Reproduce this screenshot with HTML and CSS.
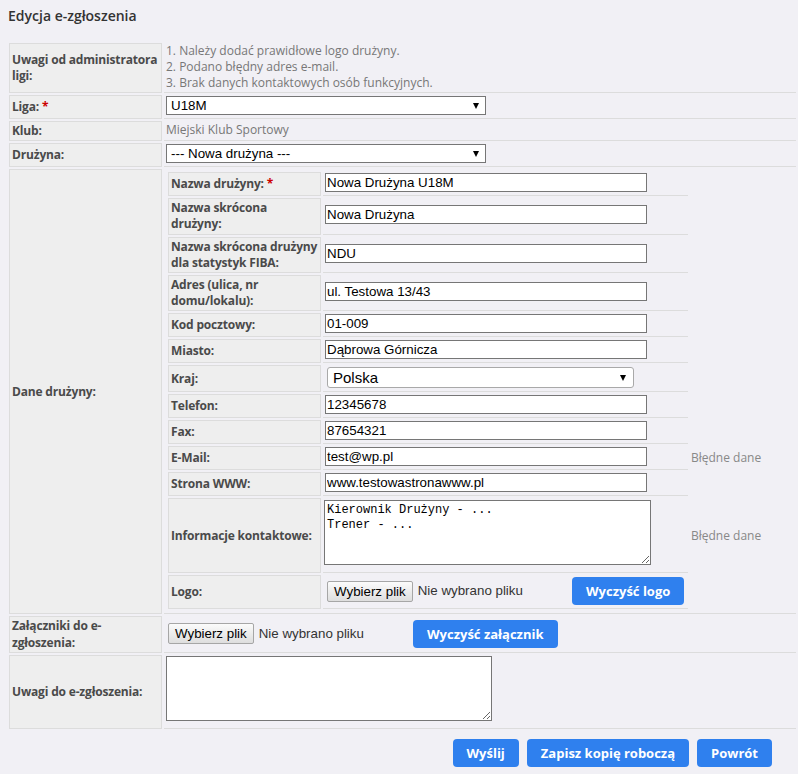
FILE: index.html
```html
<!DOCTYPE html>
<html lang="pl">
<head>
<meta charset="utf-8">
<title>Edycja e-zgłoszenia</title>
<link rel="stylesheet" href="styles.css">
</head>
<body>
<div class="page">
  <h1 class="title">Edycja e-zgłoszenia</h1>
  <table class="form outer">
    <tr>
      <th class="lbl">Uwagi od administratora ligi:</th>
      <td class="val notes">1. Należy dodać prawidłowe logo drużyny.<br>2. Podano błędny adres e-mail.<br>3. Brak danych kontaktowych osób funkcyjnych.</td>
    </tr>
    <tr>
      <th class="lbl">Liga: <span class="req">*</span></th>
      <td class="val"><div class="sel"><select class="select"><option>U18M</option></select></div></td>
    </tr>
    <tr>
      <th class="lbl">Klub:</th>
      <td class="val text">Miejski Klub Sportowy</td>
    </tr>
    <tr>
      <th class="lbl">Drużyna:</th>
      <td class="val"><div class="sel"><select class="select"><option>--- Nowa drużyna ---</option></select></div></td>
    </tr>
    <tr>
      <th class="lbl">Dane drużyny:</th>
      <td class="val nested">
        <table class="form inner">
          <tr>
            <th class="lbl">Nazwa drużyny: <span class="req">*</span></th>
            <td class="val field"><input class="txt" type="text" value="Nowa Drużyna U18M"></td>
            <td class="err"></td>
          </tr>
          <tr>
            <th class="lbl">Nazwa skrócona drużyny:</th>
            <td class="val field"><input class="txt" type="text" value="Nowa Drużyna"></td>
            <td class="err"></td>
          </tr>
          <tr>
            <th class="lbl">Nazwa skrócona drużyny dla statystyk FIBA:</th>
            <td class="val field"><input class="txt" type="text" value="NDU"></td>
            <td class="err"></td>
          </tr>
          <tr>
            <th class="lbl">Adres (ulica, nr domu/lokalu):</th>
            <td class="val field"><input class="txt" type="text" value="ul. Testowa 13/43"></td>
            <td class="err"></td>
          </tr>
          <tr>
            <th class="lbl">Kod pocztowy:</th>
            <td class="val field"><input class="txt" type="text" value="01-009"></td>
            <td class="err"></td>
          </tr>
          <tr>
            <th class="lbl">Miasto:</th>
            <td class="val field"><input class="txt" type="text" value="Dąbrowa Górnicza"></td>
            <td class="err"></td>
          </tr>
          <tr>
            <th class="lbl">Kraj:</th>
            <td class="val field"><div class="sel sel-round"><select class="select round"><option>Polska</option></select></div></td>
            <td class="err"></td>
          </tr>
          <tr>
            <th class="lbl">Telefon:</th>
            <td class="val field"><input class="txt" type="text" value="12345678"></td>
            <td class="err"></td>
          </tr>
          <tr>
            <th class="lbl">Fax:</th>
            <td class="val field"><input class="txt" type="text" value="87654321"></td>
            <td class="err"></td>
          </tr>
          <tr>
            <th class="lbl">E-Mail:</th>
            <td class="val field"><input class="txt" type="text" value="test@wp.pl"></td>
            <td class="err">Błędne dane</td>
          </tr>
          <tr>
            <th class="lbl">Strona WWW:</th>
            <td class="val field"><input class="txt" type="text" value="www.testowastronawww.pl"></td>
            <td class="err"></td>
          </tr>
          <tr>
            <th class="lbl">Informacje kontaktowe:</th>
            <td class="val field"><textarea class="ta">Kierownik Drużyny - ...
Trener - ...</textarea></td>
            <td class="err">Błędne dane</td>
          </tr>
          <tr>
            <th class="lbl">Logo:</th>
            <td class="val field filerow">
              <div class="filebox">
                <span class="file"><button class="fbtn" type="button">Wybierz plik</button><span class="fname">Nie wybrano pliku</span></span>
                <button class="btn" type="button">Wyczyść logo</button>
              </div>
            </td>
            <td class="err"></td>
          </tr>
        </table>
      </td>
    </tr>
    <tr>
      <th class="lbl">Załączniki do e-zgłoszenia:</th>
      <td class="val filerow">
        <div class="filebox">
          <span class="file"><button class="fbtn" type="button">Wybierz plik</button><span class="fname">Nie wybrano pliku</span></span>
          <button class="btn" type="button">Wyczyść załącznik</button>
        </div>
      </td>
    </tr>
    <tr>
      <th class="lbl">Uwagi do e-zgłoszenia:</th>
      <td class="val"><textarea class="ta ta-notes"></textarea></td>
    </tr>
  </table>
  <div class="actions">
    <button class="btn" type="button">Wyślij</button>
    <button class="btn" type="button">Zapisz kopię roboczą</button>
    <button class="btn" type="button">Powrót</button>
  </div>
</div>
</body>
</html>
```

FILE: styles.css
```css
html, body {
  margin: 0;
  padding: 0;
  background: #f1f0f5;
  overflow: hidden;
}

body {
  font-family: "Open Sans", "Liberation Sans", sans-serif;
  font-size: 12px;
  color: #555;
}

.page {
  padding: 6px 0 0 7px;
}

.title {
  margin: 0 0 15px 1px;
  font-size: 14px;
  line-height: 20px;
  font-weight: 600;
  color: #333;
}

.form {
  border-collapse: separate;
  border-spacing: 2px;
}

.outer {
  width: 791px;
}

.lbl {
  width: 148px;
  padding: 1px 1px 1px 2px;
  border: 1px solid #dcdcdc;
  background: #eeeeee;
  text-align: left;
  vertical-align: middle;
  font-weight: 700;
  letter-spacing: -0.17px;
  line-height: 16.2px;
  color: #4a4a4a;
}

.req {
  color: #c00;
}

.val {
  padding: 1px 2px 3px;
  border-bottom: 1px solid #dcdcdc;
  vertical-align: middle;
  line-height: 16px;
  color: #777;
}

.notes {
  padding: 0 2px 1px;
}

.text {
  padding: 1px 2px 2px;
}

.nested {
  padding: 1px 2px 2px;
}

.field {
  width: 358px;
}

.err {
  padding: 0 1px;
  vertical-align: middle;
  color: #888;
  white-space: nowrap;
}

.sel {
  position: relative;
  width: 320px;
}

.sel::after {
  content: "";
  position: absolute;
  right: 7px;
  top: 7px;
  border-left: 3.5px solid transparent;
  border-right: 3.5px solid transparent;
  border-top: 6px solid #000;
}

.select {
  display: block;
  width: 320px;
  height: 19px;
  box-sizing: border-box;
  margin: 0;
  padding: 0 0 0 4px;
  border: 1px solid #767676;
  border-radius: 0;
  background: #fff;
  font-family: "Liberation Sans", Arial, sans-serif;
  font-size: 13.33px;
  color: #000;
  appearance: none;
  -webkit-appearance: none;
}

.sel-round {
  width: 307px;
  margin: 1px 2px 0;
}

.sel-round::after {
  right: 8px;
  top: 8px;
}

.round {
  width: 307px;
  height: 21px;
  border: 1px solid #a9a9a9;
  border-radius: 3px;
  padding-left: 5px;
  font-size: 15px;
}

.txt {
  display: block;
  width: 322px;
  height: 19px;
  box-sizing: border-box;
  margin: 0;
  padding: 0 1px;
  border: 1px solid #767676;
  background: #fff;
  font-family: "Liberation Sans", Arial, sans-serif;
  font-size: 13.33px;
  color: #000;
}

.ta {
  display: block;
  width: 327px;
  height: 65px;
  box-sizing: border-box;
  margin: 1px 0 4px -1px;
  padding: 2px;
  border: 1px solid #767676;
  background: #fff;
  font-family: "Liberation Mono", "Courier New", monospace;
  font-size: 12px;
  line-height: 15px;
  color: #000;
  resize: both;
}

.ta-notes {
  width: 326px;
  margin: 0 0 4px 0;
}

.filerow {
  padding: 2px 3px 3px 4px;
}

.filebox {
  display: flex;
  align-items: center;
}

.file {
  display: flex;
  align-items: center;
  width: 240px;
  flex: none;
}

.fbtn {
  height: 21px;
  padding: 0 6px;
  border: 1px solid #a6a6a6;
  border-radius: 2px;
  background: linear-gradient(#fbfbfb, #dedede);
  font-family: "Liberation Sans", Arial, sans-serif;
  font-size: 13.33px;
  color: #000;
}

.fname {
  margin-left: 5px;
  font-family: "Liberation Sans", Arial, sans-serif;
  font-size: 13.33px;
  color: #333;
}

.btn {
  height: 28px;
  padding: 0 14px;
  border: 0;
  border-radius: 4px;
  background: #2f80ee;
  color: #fff;
  font-family: "Open Sans", sans-serif;
  font-size: 13px;
  font-weight: 700;
  white-space: nowrap;
}

.filebox .btn {
  margin-left: 5px;
}

.actions {
  display: flex;
  justify-content: flex-end;
  gap: 8px;
  width: 765px;
  margin-top: 8px;
}
```
